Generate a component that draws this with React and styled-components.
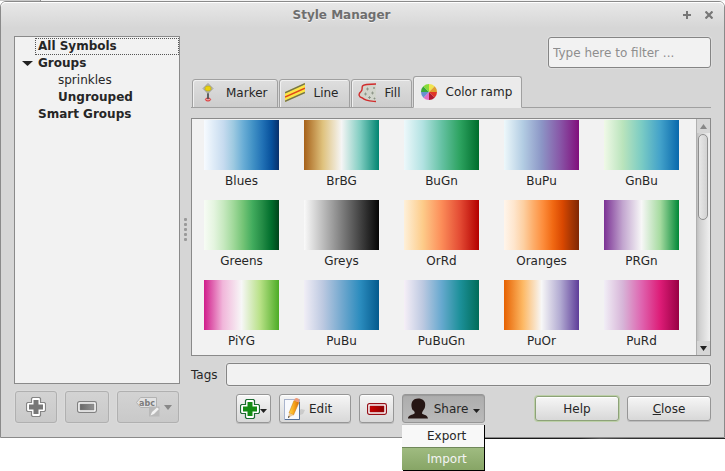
import React from "react";
import styled, { createGlobalStyle, css } from "styled-components";

const GlobalStyle = createGlobalStyle`
  *, *::before, *::after { box-sizing: border-box; }
  body {
    margin: 0;
    background: #fff;
    color: #262626;
    font: 12px/16px "DejaVu Sans", Verdana, sans-serif;
  }
  button, input { font: inherit; color: inherit; margin: 0; }
`;

const Desktop = styled.div`
  min-height: 100vh;
  overflow: hidden;
`;

const Backdrop = styled.div`
  height: 1px;
  background: linear-gradient(to right, #c9c9c9 40px, #8f8f8f 40px, #8f8f8f 41px, #f2f2f2 41px);
`;

const BackdropEdge = styled.div`
  height: 1px;
  margin-left: 484px;
  background: linear-gradient(to right, #111, #222 40%, #555 48%, #333 60%, #222);
`;

const Window = styled.main`
  border: 1px solid #8a8a8a;
  border-radius: 6px 6px 0 0;
  background: #d6d6d6;
  box-shadow: inset 0 1px 0 #fff;
`;

const TitleBar = styled.header`
  display: grid;
  grid-template-columns: 38px 1fr 80px;
  height: 26px;
  align-items: center;
  border-radius: 5px 5px 0 0;
  background: linear-gradient(#e8e8e8, #d6d6d6);
  box-shadow: inset 0 1px 0 #fff;
`;

const Title = styled.h1`
  margin: 0;
  grid-column: 2;
  font-size: 12px;
  line-height: 16px;
  text-align: center;
  color: #6e6e6e;
  text-shadow: 0 1px 0 #f2f2f2;
`;

const WindowControls = styled.div`
  display: flex;
  justify-content: flex-end;
  gap: 10px;
  padding-right: 9px;
`;

const WindowButton = styled.button`
  display: flex;
  width: 12px;
  height: 12px;
  padding: 0;
  border: 0;
  background: none;
  align-items: center;
  justify-content: center;
`;

const Body = styled.div`
  display: grid;
  grid-template-columns: 166px 11px 1fr;
  padding: 8px 13px 14px;
`;

const Side = styled.aside`
  display: flex;
  flex-direction: column;
  gap: 7px;
`;

const Tree = styled.ul`
  flex: 1;
  margin: 0;
  padding: 1px 0 0;
  list-style: none;
  border: 1px solid #8a8a8a;
  background: #f2f2f2;
`;

const TreeItem = styled.li`
  display: flex;
  height: 17px;
  align-items: center;
  font-weight: ${(p) => (p.$strong ? "bold" : "normal")};
`;

const TreeMark = styled.span`
  display: flex;
  flex: none;
  width: ${(p) => (p.$nested ? 40 : 20)}px;
  padding-left: 4px;
  justify-content: center;
`;

const TreeLabel = styled.span`
  flex: 1;
  padding: 0 2px;
  line-height: 15px;
  border: 1px dotted ${(p) => (p.$focused ? "#555" : "transparent")};
`;

const SideActions = styled.div`
  display: grid;
  grid-template-columns: 42px 44px 1fr;
  gap: 8px;
  height: 32px;
  padding: 0 1px;
`;

const Splitter = styled.div`
  display: flex;
  flex-direction: column;
  align-items: center;
  justify-content: center;
  gap: 2px;
`;

const Grip = styled.i`
  width: 3px;
  height: 3px;
  border-radius: 1px;
  background: #9a9a9a;
`;

const Main = styled.section`
  display: flex;
  min-width: 0;
  flex-direction: column;
`;

const field = css`
  border: 1px solid #858585;
  border-radius: 3px;
  background: #f2f2f2;
  box-shadow: 0 0 0 1px #dedede;
  outline: none;
`;

const FilterInput = styled.input`
  ${field}
  align-self: flex-end;
  width: 163px;
  height: 31px;
  margin-top: 1px;
  padding: 0 4px;
  &::placeholder { color: #8e8e8e; opacity: 1; }
`;

const Tabs = styled.div`
  display: flex;
  height: 32px;
  margin: 8px 0 10px;
  padding-left: 1px;
  align-items: flex-end;
  gap: 1px;
  background: linear-gradient(#a0a0a0, #a0a0a0) bottom / 100% 1px no-repeat;
`;

const Tab = styled.button`
  display: flex;
  height: ${(p) => (p.$active ? 32 : 29)}px;
  padding: ${(p) => (p.$active ? "0 9px 1px 5px" : "0 10px 1px 5px")};
  gap: ${(p) => (p.$active ? 7 : 8)}px;
  align-items: center;
  border: 1px solid #a0a0a0;
  border-bottom-color: ${(p) => (p.$active ? "#ebebeb" : "#a0a0a0")};
  border-radius: 3px 3px 0 0;
  background: ${(p) => (p.$active ? "#ebebeb" : "linear-gradient(#dedede, #cdcdcd)")};
  box-shadow: inset 1px 1px 0 #f0f0f0;
`;

const TabIcon = styled.span`
  display: flex;
  width: 20px;
  justify-content: center;
`;

const ListFrame = styled.div`
  display: grid;
  grid-template-columns: 1fr 14px;
  height: 238px;
  border: 1px solid #8a8a8a;
  background: #f2f2f2;
`;

const RampGrid = styled.ul`
  display: grid;
  margin: 0;
  padding: 1px 0 0;
  grid-template-columns: repeat(auto-fill, 100px);
  grid-auto-rows: 80px;
  align-content: start;
  list-style: none;
  overflow: hidden;
`;

const Ramp = styled.li`
  display: flex;
  padding-right: 1px;
  flex-direction: column;
  align-items: center;
  gap: 3px;
`;

const Swatch = styled.div`
  width: 75px;
  height: 50px;
  background: linear-gradient(to right, ${(p) => p.$stops});
`;

const ScrollBar = styled.div`
  display: flex;
  flex-direction: column;
  background: linear-gradient(to right, #c0c0c0, #d0d0d0 20%, #f0f0f0);
  border-left: 1px solid #b0b0b0;
`;

const ScrollButton = styled.button`
  display: flex;
  height: 14px;
  padding: 0;
  border: 0;
  align-items: center;
  justify-content: center;
  background: #d6d6d6;
`;

const ScrollTrack = styled.div`
  flex: 1;
  padding: 1px 2px 0 1px;
`;

const ScrollThumb = styled.div`
  height: 86px;
  border: 1px solid #8f8f8f;
  border-radius: 5px;
  background: linear-gradient(to right, #e8e8e8, #d2d2d2);
`;

const TagsRow = styled.div`
  display: flex;
  height: 23px;
  margin-top: 7px;
  align-items: center;
`;

const TagsLabel = styled.label`
  width: 35px;
`;

const TagsInput = styled.input`
  ${field}
  flex: 1;
  min-width: 0;
  height: 23px;
`;

const ActionRow = styled.div`
  display: flex;
  margin-top: 8px;
  padding-left: 45px;
  align-items: center;
  gap: 8px;
`;

const Button = styled.button`
  display: flex;
  width: ${(p) => p.$width || 84}px;
  height: ${(p) => (p.$tool ? 29 : 25)}px;
  padding: 0 3px;
  align-items: center;
  justify-content: ${(p) => (p.$start ? "flex-start" : "center")};
  gap: ${(p) => p.$gap || 0}px;
  border: 1px solid ${(p) => (p.$green ? "#8da278" : "#969696")};
  border-radius: 3px;
  background: ${(p) => (p.$pressed ? "linear-gradient(#adadad, #bababa)" : "linear-gradient(#f6f6f6, #d8d8d8)")};
  box-shadow: ${(p) =>
    p.$pressed ? "inset 0 1px 1px #999" : p.$green ? "0 0 0 1px #bdd0a8, inset 0 1px 0 #fff" : "0 1px 0 #bcbcbc, inset 0 1px 0 #fff"};
`;

const DropMark = styled.span`
  display: flex;
  padding-top: 4px;
`;

const DisabledButton = styled.button`
  display: flex;
  padding: ${(p) => (p.$end ? "0 6px 0 0" : "0")};
  align-items: center;
  justify-content: ${(p) => (p.$end ? "flex-end" : "center")};
  gap: 4px;
  border: 1px solid #b0b0b0;
  border-radius: 3px;
  background: linear-gradient(#d3d3d3, #c9c9c9);
  box-shadow: 0 0 0 1px #dadada;
`;

const DialogButtons = styled.div`
  display: flex;
  margin-left: auto;
  gap: 8px;
`;

const ShareBox = styled.div`
  position: relative;
`;

const Menu = styled.div`
  position: absolute;
  z-index: 2;
  top: 30px;
  left: 0;
  width: 82px;
  background: #f8f8f8;
  border-top: 1px solid #c4c4c4;
  box-shadow: 1px 1px 0 #000;
`;

const MenuItem = styled.button`
  display: block;
  width: 100%;
  height: ${(p) => (p.$selected ? 23 : 22)}px;
  padding: 0 0 0 25px;
  text-align: left;
  border: 0;
  border-top: ${(p) => (p.$selected ? "1px solid #6f8759" : "0")};
  color: ${(p) => (p.$selected ? "#f4f4f4" : "#262626")};
  background: ${(p) => (p.$selected ? "linear-gradient(#9fbb80, #87a566)" : "#f8f8f8")};
`;

const Arrow = ({ w = 7, h = 4, up, color = "#222" }) => (
  <svg width={w} height={h} viewBox="0 0 8 4" preserveAspectRatio="none" aria-hidden="true">
    <path d={up ? "M0 4L4 0L8 4Z" : "M0 0H8L4 4Z"} fill={color} />
  </svg>
);

const PlusIcon = ({ fill, line }) => (
  <svg width="20" height="20" viewBox="0 0 20 20" aria-hidden="true">
    <path
      d="M6.5 .5h7l1 1v4h4l1 1v7l-1 1h-4v4l-1 1h-7l-1-1v-4h-4l-1-1v-7l1-1h4v-4Z"
      fill="#fff" stroke={line} strokeWidth="1.2"
    />
    <path d="M7.5 3h5v4.500h4.500v5h-4.500V17h-5v-4.500H3v-5h4.500Z" fill={fill} />
  </svg>
);

const MinusIcon = ({ id, from, to, line }) => (
  <svg width="20" height="12" viewBox="0 0 20 12" aria-hidden="true">
    <defs>
      <linearGradient id={id}>
        <stop offset="0" stopColor={from} />
        <stop offset="1" stopColor={to} />
      </linearGradient>
    </defs>
    <rect x=".6" y=".6" width="18.800" height="10.800" rx="1.800" fill="#fff" stroke={line} strokeWidth="1.200" />
    <rect x="3" y="3" width="14" height="6" fill={`url(#${id})`} stroke={line} strokeWidth=".6" />
  </svg>
);

const TagIcon = () => (
  <svg width="24" height="20" viewBox="0 0 24 20" aria-hidden="true">
    <path d="M4.500 .5H20.500V10.500H4.500L.5 5.500Z" fill="#e2e2e2" stroke="#b2b2b2" />
    <text x="3" y="8.500" fontFamily="DejaVu Sans" fontSize="8" fontWeight="bold" fill="#7c7c7c">abc</text>
    <rect x="13" y="9.500" width="10.500" height="10" fill="#b9b9b9" />
    <path d="M14.500 18.500L16 15L21 10.500L23 12L18 17Z" fill="#f2f2f2" />
  </svg>
);

const MarkerIcon = () => (
  <svg width="12" height="20" viewBox="0 0 12 20" aria-hidden="true">
    <ellipse cx="6" cy="16.500" rx="2.600" ry="1.500" fill="#e99" stroke="#d33" />
    <path d="M6 9V16" stroke="#555" strokeWidth="1.800" />
    <path d="M6 .5L11 5.500L6 10.500L1 5.500Z" fill="#bdbdb3" stroke="#999990" strokeWidth=".8" />
    <path d="M4.500 3h3L9 4.500v2L7.500 8h-3L3 6.500v-2Z" fill="#ead10c" stroke="#aa9a1c" strokeWidth=".6" />
  </svg>
);

const LineIcon = () => (
  <svg width="20" height="20" viewBox="0 0 20 20" aria-hidden="true">
    <path d="M0 9L20 0V10L0 19Z" fill="#fbe546" />
    <path d="M0 9.700L20 .8M0 18.300L20 9.400" stroke="#74744c" strokeWidth="1.500" />
    <path d="M0 14L20 5.100" stroke="#e04818" strokeWidth="1.500" />
  </svg>
);

const FillIcon = () => (
  <svg width="18" height="20" viewBox="0 0 18 20" aria-hidden="true">
    <path d="M18 1C12 1 6 1 4.500 3C3.500 5 5 6.500 3 8.500C0 11 .5 14 4.500 15C7 18 12 18 18 18.500Z" fill="#d2d5cc" />
    <path d="M18 1C12 1 6 1 4.500 3C3.500 5 5 6.500 3 8.500C0 11 .5 14 4.500 15C7 18 12 18 18 18.500" fill="none" stroke="#d12c2c" strokeWidth="1.400" />
    <path d="M8 6h3M9.500 4.500v3M13 10h3M14.500 8.500v3M6 11h3M7.500 9.500v3M10 14.500h3M11.500 13v3M15 5h2M16 4v2M15.500 15.500h2M16.500 14.500v2" stroke="#858f82" strokeWidth=".8" />
  </svg>
);

const WHEEL = ["#f0e450", "#e0a030", "#e03528", "#b01830", "#e070c8", "#6890d0", "#38a838", "#88dc38"];

const WheelIcon = () => (
  <svg width="16" height="16" viewBox="-8 -8 16 16" aria-hidden="true">
    {WHEEL.map((c, i) => (
      <path key={c} d="M0 0V-8A8 8 0 0 1 5.657 -5.657Z" fill={c} transform={`rotate(${i * 45})`} />
    ))}
  </svg>
);

const EditIcon = () => (
  <svg width="23" height="24" viewBox="0 0 23 24" aria-hidden="true">
    <defs>
      <linearGradient id="pencil">
        <stop offset="0" stopColor="#ffd84c" />
        <stop offset=".5" stopColor="#f8a51c" />
        <stop offset="1" stopColor="#d86c08" />
      </linearGradient>
    </defs>
    <path d="M10 20L18 12L22 13L20 17L14 19Z" fill="#bbb" opacity=".6" />
    <rect x="1.500" y="2.500" width="15" height="20" fill="#f8f9fd" stroke="#a9b4cd" />
    <path d="M16.500 5V22.500H2" fill="none" stroke="#557098" />
    <path d="M6 16L11 3.500L16 5.500L10.500 18Z" fill="url(#pencil)" stroke="#c8780f" strokeWidth=".5" />
    <path d="M11 3.500L12 1.500Q14.500 0 16.500 3L16 5.500Z" fill="#ee9a78" />
    <path d="M6 16L5 21L10.500 18Z" fill="#edc896" />
    <path d="M5.300 19.200L5 21L7 19.800Z" fill="#222" />
  </svg>
);

const PersonIcon = () => (
  <svg width="22" height="21" viewBox="0 0 22 21" aria-hidden="true">
    <path
      d="M11 .5C15.500 .5 18.500 3 18.200 7C18 9 18 10 16.800 11.500C16 13 15 14 15 15.500C16 17 20.500 16.500 21 20.500H1C1 17 5.500 17 7.500 15.500C8 14.500 7.500 13.500 6.500 12.500C5 12 5 10.500 4.500 8.500C4 3.500 6.500 .5 11 .5Z"
      fill="#261614"
    />
  </svg>
);

const TREE = [
  { label: "All Symbols", strong: true, focused: true },
  { label: "Groups", strong: true, open: true },
  { label: "sprinkles", nested: true },
  { label: "Ungrouped", strong: true, nested: true },
  { label: "Smart Groups", strong: true },
];

const TABS = [
  { label: "Marker", icon: <MarkerIcon /> },
  { label: "Line", icon: <LineIcon /> },
  { label: "Fill", icon: <FillIcon /> },
  { label: "Color ramp", icon: <WheelIcon />, active: true },
];

const RAMPS = [
  ["Blues", "#f7fbff, #deebf7 13%, #c6dbef 26%, #9ecae1 39%, #6baed6 52%, #4292c6 65%, #2171b5 78%, #08519c 90%, #08306b"],
  ["BrBG", "#a6611a, #dfc27d 25%, #f5f5f5 50%, #80cdc1 75%, #018571"],
  ["BuGn", "#edf8fb, #b2e2e2 25%, #66c2a4 50%, #2ca25f 75%, #006d2c"],
  ["BuPu", "#edf8fb, #b3cde3 25%, #8c96c6 50%, #8856a7 75%, #810f7c"],
  ["GnBu", "#f0f9e8, #bae4bc 25%, #7bccc4 50%, #43a2ca 75%, #0868ac"],
  ["Greens", "#f7fcf5, #e5f5e0 13%, #c7e9c0 26%, #a1d99b 39%, #74c476 52%, #41ab5d 65%, #238b45 78%, #006d2c 90%, #00441b"],
  ["Greys", "#fafafa, #050505"],
  ["OrRd", "#fef0d9, #fdcc8a 25%, #fc8d59 50%, #e34a33 75%, #b30000"],
  ["Oranges", "#fff5eb, #fee6ce 13%, #fdd0a2 26%, #fdae6b 39%, #fd8d3c 52%, #f16913 65%, #d94801 78%, #a63603 90%, #7f2704"],
  ["PRGn", "#7b3294, #c2a5cf 25%, #f7f7f7 50%, #a6dba0 75%, #008837"],
  ["PiYG", "#d01c8b, #f1b6da 25%, #f7f7f7 50%, #b8e186 75%, #4dac26"],
  ["PuBu", "#f1eef6, #bdc9e1 25%, #74a9cf 50%, #2b8cbe 75%, #045a8d"],
  ["PuBuGn", "#f6eff7, #bdc9e1 25%, #67a9cf 50%, #1c9099 75%, #016c59"],
  ["PuOr", "#e66101, #fdb863 25%, #f7f7f7 50%, #b2abd2 75%, #5e3c99"],
  ["PuRd", "#f1eef6, #d7b5d8 25%, #df65b0 50%, #dd1c77 75%, #980043"],
];

export default function App() {
  return (
    <Desktop>
      <GlobalStyle />
      <Backdrop />
      <Window>
        <TitleBar>
          <Title>Style Manager</Title>
          <WindowControls>
            <WindowButton aria-label="Maximize">
              <svg width="8" height="8" viewBox="0 0 8 8"><path d="M4 0V8M0 4H8" stroke="#777" strokeWidth="2" /></svg>
            </WindowButton>
            <WindowButton aria-label="Close window">
              <svg width="8" height="8" viewBox="0 0 8 8"><path d="M.5 .5L7.500 7.500M7.500 .5L.5 7.500" stroke="#777" strokeWidth="2.200" /></svg>
            </WindowButton>
          </WindowControls>
        </TitleBar>
        <Body>
          <Side>
            <Tree>
              {TREE.map((t) => (
                <TreeItem key={t.label} $strong={t.strong}>
                  <TreeMark $nested={t.nested}>{t.open && <Arrow w={11} h={5} />}</TreeMark>
                  <TreeLabel $focused={t.focused}>{t.label}</TreeLabel>
                </TreeItem>
              ))}
            </Tree>
            <SideActions>
              <DisabledButton disabled aria-label="Add group"><PlusIcon fill="#777" line="#858585" /></DisabledButton>
              <DisabledButton disabled aria-label="Remove group">
                <MinusIcon id="minusGrey" from="#686868" to="#929292" line="#808080" />
              </DisabledButton>
              <DisabledButton disabled $end aria-label="Tag symbols">
                <TagIcon />
                <Arrow w={8} h={5} color="#888" />
              </DisabledButton>
            </SideActions>
          </Side>
          <Splitter>
            <Grip /><Grip /><Grip /><Grip /><Grip />
          </Splitter>
          <Main>
            <FilterInput aria-label="Filter" placeholder="Type here to filter ..." />
            <Tabs role="tablist">
              {TABS.map((t) => (
                <Tab key={t.label} role="tab" aria-selected={!!t.active} $active={t.active}>
                  <TabIcon>{t.icon}</TabIcon>
                  {t.label}
                </Tab>
              ))}
            </Tabs>
            <ListFrame>
              <RampGrid>
                {RAMPS.map(([name, stops]) => (
                  <Ramp key={name}>
                    <Swatch $stops={stops} />
                    {name}
                  </Ramp>
                ))}
              </RampGrid>
              <ScrollBar>
                <ScrollButton aria-label="Scroll up"><Arrow up w={7} h={5} color="#888" /></ScrollButton>
                <ScrollTrack><ScrollThumb /></ScrollTrack>
                <ScrollButton aria-label="Scroll down"><Arrow w={7} h={5} /></ScrollButton>
              </ScrollBar>
            </ListFrame>
            <TagsRow>
              <TagsLabel htmlFor="tags">Tags</TagsLabel>
              <TagsInput id="tags" />
            </TagsRow>
            <ActionRow>
              <Button $tool $width={35} aria-label="Add item">
                <PlusIcon fill="#148c14" line="#1c6b32" />
                <DropMark><Arrow /></DropMark>
              </Button>
              <Button $tool $start $width={72} $gap={3}><EditIcon />Edit</Button>
              <Button $tool $width={35} aria-label="Remove item">
                <MinusIcon id="minusRed" from="#cc0000" to="#8c0000" line="#960f17" />
              </Button>
              <ShareBox>
                <Button $tool $pressed $width={83} $gap={5} aria-haspopup="menu" aria-expanded="true">
                  <PersonIcon />Share<DropMark><Arrow /></DropMark>
                </Button>
                <Menu role="menu">
                  <MenuItem role="menuitem">Export</MenuItem>
                  <MenuItem role="menuitem" $selected>Import</MenuItem>
                </Menu>
              </ShareBox>
              <DialogButtons>
                <Button $green>Help</Button>
                <Button><span><u>C</u>lose</span></Button>
              </DialogButtons>
            </ActionRow>
          </Main>
        </Body>
      </Window>
      <BackdropEdge />
    </Desktop>
  );
}
